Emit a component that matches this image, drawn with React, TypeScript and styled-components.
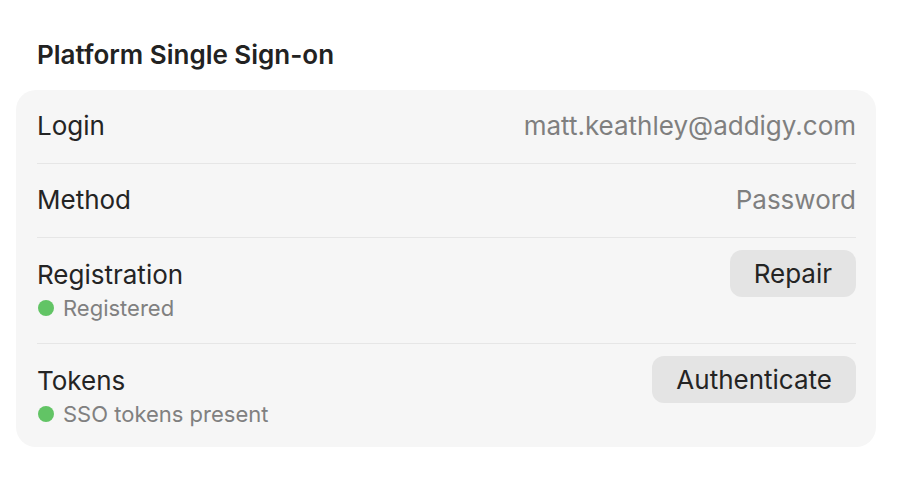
import React from "react";
import styled, { createGlobalStyle } from "styled-components";

const Global = createGlobalStyle`
  html, body { margin: 0; padding: 0; background: #ffffff; }
  body { font-family: Inter, "Noto Sans", sans-serif; -webkit-font-smoothing: antialiased; }
`;

const Page = styled.div`
  width: 902px;
  height: 480px;
  box-sizing: border-box;
  padding: 38px 26px 0 16px;
  display: flex;
  flex-direction: column;
`;

const Title = styled.h2`
  margin: 0 0 0 21px;
  font-size: 26px;
  line-height: 34px;
  font-weight: 600;
  color: #222222;
  letter-spacing: 0;
`;

const Card = styled.div`
  margin-top: 18px;
  background: #f6f6f6;
  border-radius: 20px;
  padding: 0 20px 0 21px;
  display: flex;
  flex-direction: column;
`;

const Row = styled.div<{ $tall?: boolean }>`
  display: flex;
  justify-content: space-between;
  align-items: ${(p) => (p.$tall ? "flex-start" : "center")};
  padding: ${(p) => (p.$tall ? "12px 0 20px" : "21px 0 22px")};
  border-bottom: 1px solid #e6e6e6;
  &:last-child { border-bottom: none; padding-bottom: 18px; }
`;

const LeftCol = styled.div<{ $tall?: boolean }>`
  display: flex;
  flex-direction: column;
  gap: 3px;
  padding-top: ${(p) => (p.$tall ? "10px" : "0")};
`;

const Label = styled.div`
  font-size: 26px;
  line-height: 30px;
  color: #242424;
`;

const Value = styled.div`
  font-size: 26px;
  line-height: 30px;
  color: #7f7f7f;
`;

const Status = styled.div`
  display: flex;
  align-items: center;
  gap: 9px;
  font-size: 22px;
  line-height: 30px;
  color: #808080;
`;

const Dot = styled.span`
  width: 16px;
  height: 16px;
  border-radius: 50%;
  background: #62c465;
  flex: none;
  margin-left: 1px;
`;

const Button = styled.button`
  height: 47px;
  padding: 0 24px;
  border: none;
  border-radius: 12px;
  background: #e4e4e4;
  color: #242424;
  font-family: inherit;
  font-size: 26px;
  cursor: pointer;
`;

export default function App() {
  return (
    <>
      <Global />
      <Page>
        <Title>Platform Single Sign-on</Title>
        <Card>
          <Row>
            <Label>Login</Label>
            <Value>matt.keathley@addigy.com</Value>
          </Row>
          <Row>
            <Label>Method</Label>
            <Value>Password</Value>
          </Row>
          <Row $tall>
            <LeftCol $tall>
              <Label>Registration</Label>
              <Status>
                <Dot />
                Registered
              </Status>
            </LeftCol>
            <Button>Repair</Button>
          </Row>
          <Row $tall>
            <LeftCol $tall>
              <Label>Tokens</Label>
              <Status>
                <Dot />
                SSO tokens present
              </Status>
            </LeftCol>
            <Button>Authenticate</Button>
          </Row>
        </Card>
      </Page>
    </>
  );
}
